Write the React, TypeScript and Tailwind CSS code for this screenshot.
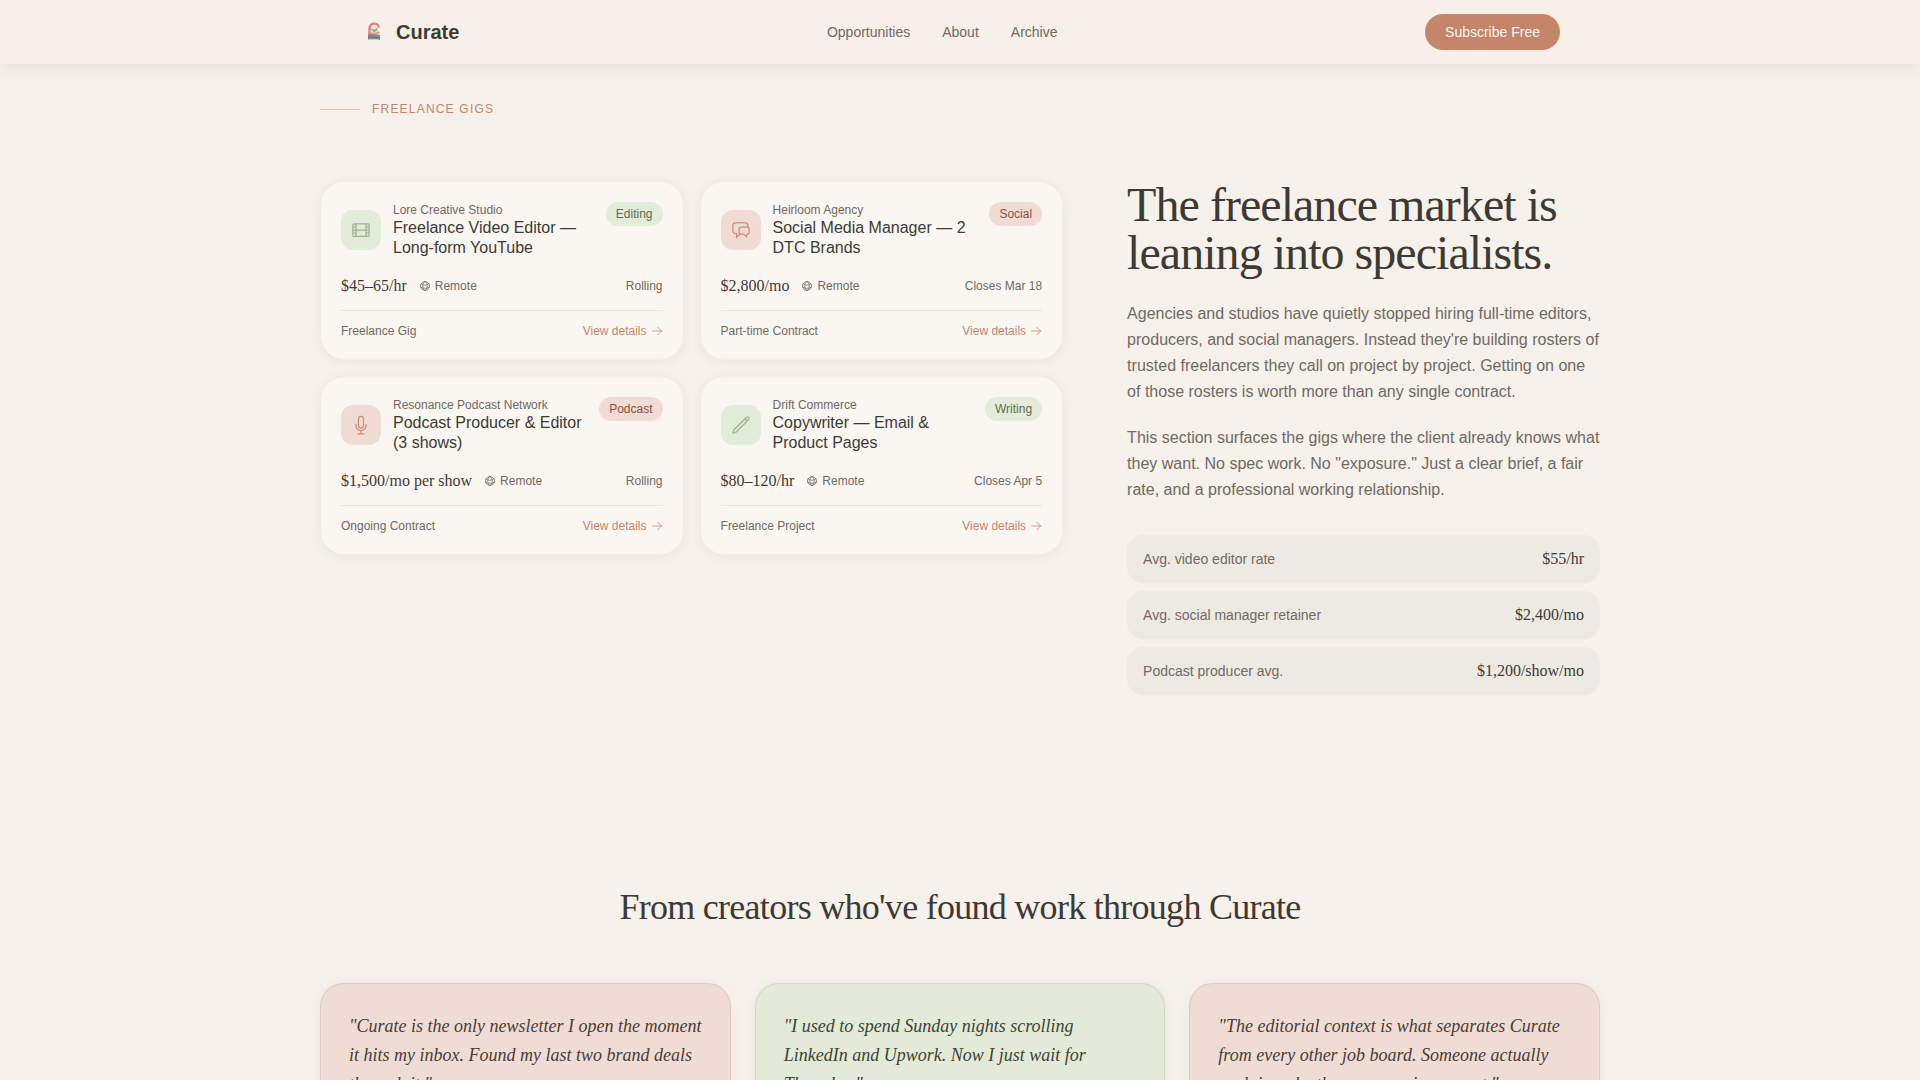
import type { ComponentType } from "react";
import {
  HiOutlineArrowRight,
  HiOutlineChatBubbleLeftRight,
  HiOutlineFilm,
  HiOutlineGlobeAlt,
  HiOutlineMicrophone,
  HiOutlinePencil,
} from "react-icons/hi2";

const serif = "font-['Liberation_Serif',serif]";

type Tone = "sage" | "blush";

type Gig = {
  company: string;
  title: string;
  tag: string;
  tone: Tone;
  icon: ComponentType<{ className?: string }>;
  pay: string;
  closes: string;
  kind: string;
};

const gigs: Gig[] = [
  {
    company: "Lore Creative Studio",
    title: "Freelance Video Editor — Long-form YouTube",
    tag: "Editing",
    tone: "sage",
    icon: HiOutlineFilm,
    pay: "$45–65/hr",
    closes: "Rolling",
    kind: "Freelance Gig",
  },
  {
    company: "Heirloom Agency",
    title: "Social Media Manager — 2 DTC Brands",
    tag: "Social",
    tone: "blush",
    icon: HiOutlineChatBubbleLeftRight,
    pay: "$2,800/mo",
    closes: "Closes Mar 18",
    kind: "Part-time Contract",
  },
  {
    company: "Resonance Podcast Network",
    title: "Podcast Producer & Editor (3 shows)",
    tag: "Podcast",
    tone: "blush",
    icon: HiOutlineMicrophone,
    pay: "$1,500/mo per show",
    closes: "Rolling",
    kind: "Ongoing Contract",
  },
  {
    company: "Drift Commerce",
    title: "Copywriter — Email & Product Pages",
    tag: "Writing",
    tone: "sage",
    icon: HiOutlinePencil,
    pay: "$80–120/hr",
    closes: "Closes Apr 5",
    kind: "Freelance Project",
  },
];

const rates = [
  ["Avg. video editor rate", "$55/hr"],
  ["Avg. social manager retainer", "$2,400/mo"],
  ["Podcast producer avg.", "$1,200/show/mo"],
];

const quotes: { text: string; tone: Tone }[] = [
  {
    text: '"Curate is the only newsletter I open the moment it hits my inbox. Found my last two brand deals through it."',
    tone: "blush",
  },
  {
    text: '"I used to spend Sunday nights scrolling LinkedIn and Upwork. Now I just wait for Thursday."',
    tone: "sage",
  },
  {
    text: '"The editorial context is what separates Curate from every other job board. Someone actually explains why the company is so great."',
    tone: "blush",
  },
];

const tileTone = {
  sage: "bg-[#e3ebd9] text-[#a3b094]",
  blush: "bg-[#f0dcd5] text-[#cd8d74]",
};
const badgeTone = {
  sage: "bg-[#e3ebd9] text-[#5f6e50]",
  blush: "bg-[#f0dcd5] text-[#8f5040]",
};
const quoteTone = {
  sage: "bg-[#e3ead8] text-[#3d4436]",
  blush: "bg-[#efddd5] text-[#4b3c36]",
};

function Logo() {
  return (
    <svg viewBox="0 0 28 28" className="size-7" aria-hidden="true">
      <circle cx="14" cy="12" r="4.500" fill="#efe3cf" />
      <path d="M9.500 16.500V10.500A4.800 4.800 0 0 1 19 9.500" fill="none" stroke="#d08773" strokeWidth="2.400" />
      <path d="M9.500 14.500c2 2 7 2 9.800-.5" fill="none" stroke="#d9a08c" strokeWidth="2.200" />
      <path d="M14.500 14.500v-3M14.500 13.500c-2 0-2.900-1.200-2.900-2.600 1.800 0 2.900 1 2.900 2.600Zm0-.4c0-1.600 1.100-2.600 2.700-2.600 0 1.600-.9 2.600-2.700 2.600Z" fill="#b3c294" stroke="#7f9a86" strokeWidth=".6" />
      <path d="M8 15.800l12 1v5.200l-3.500-.8-8.500.2Z" fill="#8a898d" />
      <path d="M8 19l12 .6" stroke="#6e6d73" strokeWidth="1" />
    </svg>
  );
}

function Header() {
  return (
    <header className="sticky top-0 z-10 bg-[#f7f0e9] shadow-[0_4px_16px_rgba(60,56,50,0.08)]">
      <div className="mx-auto flex h-16 max-w-[1280px] items-center justify-between px-10">
        <a href="#" className="flex items-center gap-2 text-xl font-bold text-[#3d3a35]">
          <Logo />
          Curate
        </a>
        <nav className="flex gap-8 text-sm text-[#6f6a64]">
          <a href="#opportunities">Opportunities</a>
          <a href="#about">About</a>
          <a href="#archive">Archive</a>
        </nav>
        <button type="button" className="rounded-full bg-[#c4856b] px-5 py-2 text-sm text-[#fcf4ee]">
          Subscribe Free
        </button>
      </div>
    </header>
  );
}

function GigCard({ gig }: { gig: Gig }) {
  const Icon = gig.icon;
  return (
    <article className="rounded-3xl border border-[#f0ece6] bg-[#faf7f3] p-5 shadow-[0_2px_12px_rgba(60,56,50,0.06)]">
      <div className="flex items-center gap-3">
        <div className={`flex size-10 shrink-0 items-center justify-center rounded-xl ${tileTone[gig.tone]}`}>
          <Icon className="size-5" />
        </div>
        <div className="min-w-0 flex-1">
          <p className="text-xs leading-4 text-[#6f6a64]">{gig.company}</p>
          <h3 className="text-base leading-5 text-[#3d3a35]">{gig.title}</h3>
        </div>
        <span className={`self-start rounded-full px-2.5 py-1 text-xs leading-4 ${badgeTone[gig.tone]}`}>{gig.tag}</span>
      </div>
      <div className="mt-4 flex items-center gap-3 text-xs text-[#6f6a64]">
        <span className={`text-base leading-6 text-[#3d3a35] ${serif}`}>{gig.pay}</span>
        <span className="flex items-center gap-1">
          <HiOutlineGlobeAlt className="size-3" />
          Remote
        </span>
        <span className="ml-auto">{gig.closes}</span>
      </div>
      <div className="mt-3 flex items-center justify-between border-t border-[#e8e4de] pt-3 text-xs leading-4 text-[#6f6a64]">
        <span>{gig.kind}</span>
        <a href="#details" className="flex items-center gap-1 text-[#c4856b]">
          View details
          <HiOutlineArrowRight className="size-3" />
        </a>
      </div>
    </article>
  );
}

export default function App() {
  return (
    <div className="min-h-screen bg-[#f6f1ea] font-['Liberation_Sans',Arial,sans-serif] text-[#3d3a35]">
      <Header />
      <main className="mx-auto max-w-[1280px]">
        <section id="opportunities" className="pt-[37px] pb-24">
          <div className="flex items-center gap-3 text-xs leading-4 tracking-widest text-[#c4856b] uppercase">
            <span className="h-px w-10 bg-[#e0c3b0]" />
            Freelance Gigs
          </div>
          <div className="mt-16 grid grid-cols-[11fr_7fr] gap-16">
            <div className="grid grid-cols-2 content-start gap-4">
              {gigs.map((gig) => (
                <GigCard key={gig.company} gig={gig} />
              ))}
            </div>
            <div>
              <h2 className={`text-5xl leading-none tracking-[-0.02em] ${serif}`}>
                The freelance market is leaning into specialists.
              </h2>
              <div className="mt-6 space-y-5 text-base leading-[26px] text-[#6f6a64]">
                <p>
                  Agencies and studios have quietly stopped hiring full-time editors, producers, and social managers.
                  Instead they're building rosters of trusted freelancers they call on project by project. Getting on
                  one of those rosters is worth more than any single contract.
                </p>
                <p>
                  This section surfaces the gigs where the client already knows what they want. No spec work. No
                  "exposure." Just a clear brief, a fair rate, and a professional working relationship.
                </p>
              </div>
              <dl className="mt-8 space-y-2">
                {rates.map(([label, value]) => (
                  <div key={label} className="flex items-center justify-between rounded-2xl bg-[#edeae4] px-4 py-3">
                    <dt className="text-sm text-[#6f6a64]">{label}</dt>
                    <dd className={`text-base leading-6 ${serif}`}>{value}</dd>
                  </div>
                ))}
              </dl>
            </div>
          </div>
        </section>
        <section id="about" className="pt-24 pb-24">
          <h2 className={`text-center text-4xl tracking-[-0.02em] ${serif}`}>
            From creators who've found work through Curate
          </h2>
          <div className="mt-14 grid grid-cols-3 gap-6">
            {quotes.map((quote) => (
              <blockquote
                key={quote.text}
                className={`rounded-3xl border border-black/8 p-7 text-lg leading-[29px] italic shadow-[0_2px_12px_rgba(60,56,50,0.06)] ${serif} ${quoteTone[quote.tone]}`}
              >
                {quote.text}
              </blockquote>
            ))}
          </div>
        </section>
      </main>
    </div>
  );
}
